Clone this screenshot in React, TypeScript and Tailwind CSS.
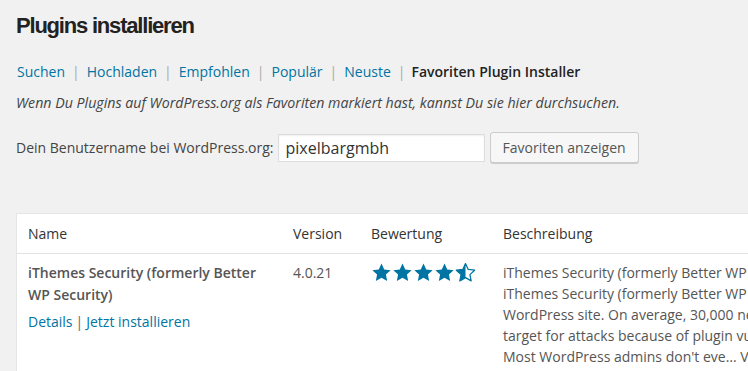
import React from "react";

const Star = ({ kind }: { kind: "full" | "half" }) => {
  const d =
    "M10 1.5l2.6 5.6 6.1.7-4.5 4.2 1.2 6-5.4-3.1-5.4 3.1 1.2-6L1.3 7.8l6.1-.7z";
  return (
    <svg width="21" height="21" viewBox="0 0 20 20" className="shrink-0">
      {kind === "full" ? (
        <path d={d} fill="#0074a2" />
      ) : (
        <>
          <defs>
            <clipPath id="halfStar">
              <rect x="0" y="0" width="10" height="20" />
            </clipPath>
          </defs>
          <path d={d} fill="none" stroke="#0074a2" strokeWidth="1.2" strokeLinejoin="round" />
          <path d={d} fill="#0074a2" clipPath="url(#halfStar)" />
        </>
      )}
    </svg>
  );
};

const navItems = ["Suchen", "Hochladen", "Empfohlen", "Populär", "Neuste"];

const descLines = [
  "iThemes Security (formerly Better WP Security) gives you over 30+ ways",
  "iThemes Security (formerly Better WP Security) gives you over 30+ ways to secure",
  "WordPress site. On average, 30,000 new websites are hacked each day.",
  "target for attacks because of plugin vulnerabilities, weak passwords and",
  "Most WordPress admins don't eve… Von iThemes",
];

export default function App() {
  return (
    <div
      className="w-[748px] h-[371px] overflow-hidden bg-[#f1f1f1] text-[#444] pl-4"
      style={{ fontFamily: '"Open Sans", sans-serif' }}
    >
      <h2
        className="pt-[11px] text-[22px] leading-[29px] font-bold tracking-[-1.2px] text-[#222]"
        style={{ fontFamily: '"Liberation Sans", Arial, sans-serif' }}
      >
        Plugins installieren
      </h2>

      {/* Tabs */}
      <div className="mt-[22px] flex items-center text-[14px] leading-[20px] text-[#666]">
        {navItems.map((item) => (
          <React.Fragment key={item}>
            <a className="text-[#0074a2] px-px">{item}</a>
            <span className="px-[6px] text-[#aaa]">|</span>
          </React.Fragment>
        ))}
        <span className="font-semibold text-[#222]">Favoriten Plugin Installer</span>
      </div>

      <p className="mt-[11px] text-[14.2px] leading-[20px] italic text-[#444]">
        Wenn Du Plugins auf WordPress.org als Favoriten markiert hast, kannst Du sie hier durchsuchen.
      </p>

      {/* Username form */}
      <div className="mt-[19px] flex items-center text-[14px]">
        <label className="text-[#444]">Dein Benutzername bei WordPress.org:</label>
        <input
          defaultValue="pixelbargmbh"
          className="ml-[4px] w-[207px] h-[28px] bg-white border border-[#ddd] px-[7px] text-[16px] text-[#333] shadow-[inset_0_1px_2px_rgba(0,0,0,0.07)] outline-none"
        />
        <button className="ml-[5px] h-[31px] px-[12px] bg-[#f7f7f7] border border-[#ccc] rounded-[3px] text-[14px] text-[#555] shadow-[0_1px_0_#ccc]">
          Favoriten anzeigen
        </button>
      </div>

      {/* Results table */}
      <div className="mt-[50px] w-[900px] bg-white border border-[#e5e5e5] text-[14px]">
        <div className="grid grid-cols-[264px_78px_132px_1fr] h-[40px] items-center border-b border-[#e1e1e1] text-[#333]">
          <div className="pl-[11px] pr-3">Name</div>
          <div className="px-3">Version</div>
          <div className="px-3">Bewertung</div>
          <div className="px-3">Beschreibung</div>
        </div>
        <div className="grid grid-cols-[264px_78px_132px_1fr] pt-[8px] pb-4">
          <div className="pl-[11px] pr-3">
            <div className="font-semibold text-[#555] leading-[22px]">
              iThemes Security (formerly Better WP Security)
            </div>
            <div className="mt-[5px] leading-[22px] text-[#0074a2]">
              <a>Details</a>
              <span className="text-[#666] px-[3px]">|</span>
              <a>Jetzt installieren</a>
            </div>
          </div>
          <div className="px-3 leading-[22px] text-[#555]">4.0.21</div>
          <div className="pl-[12px] flex">
            <Star kind="full" />
            <Star kind="full" />
            <Star kind="full" />
            <Star kind="full" />
            <Star kind="half" />
          </div>
          <div className="px-3 text-[#555] leading-[21px]">
            {descLines.map((l, i) => (
              <div key={i} className="whitespace-nowrap">
                {l}
              </div>
            ))}
          </div>
        </div>
      </div>
    </div>
  );
}
